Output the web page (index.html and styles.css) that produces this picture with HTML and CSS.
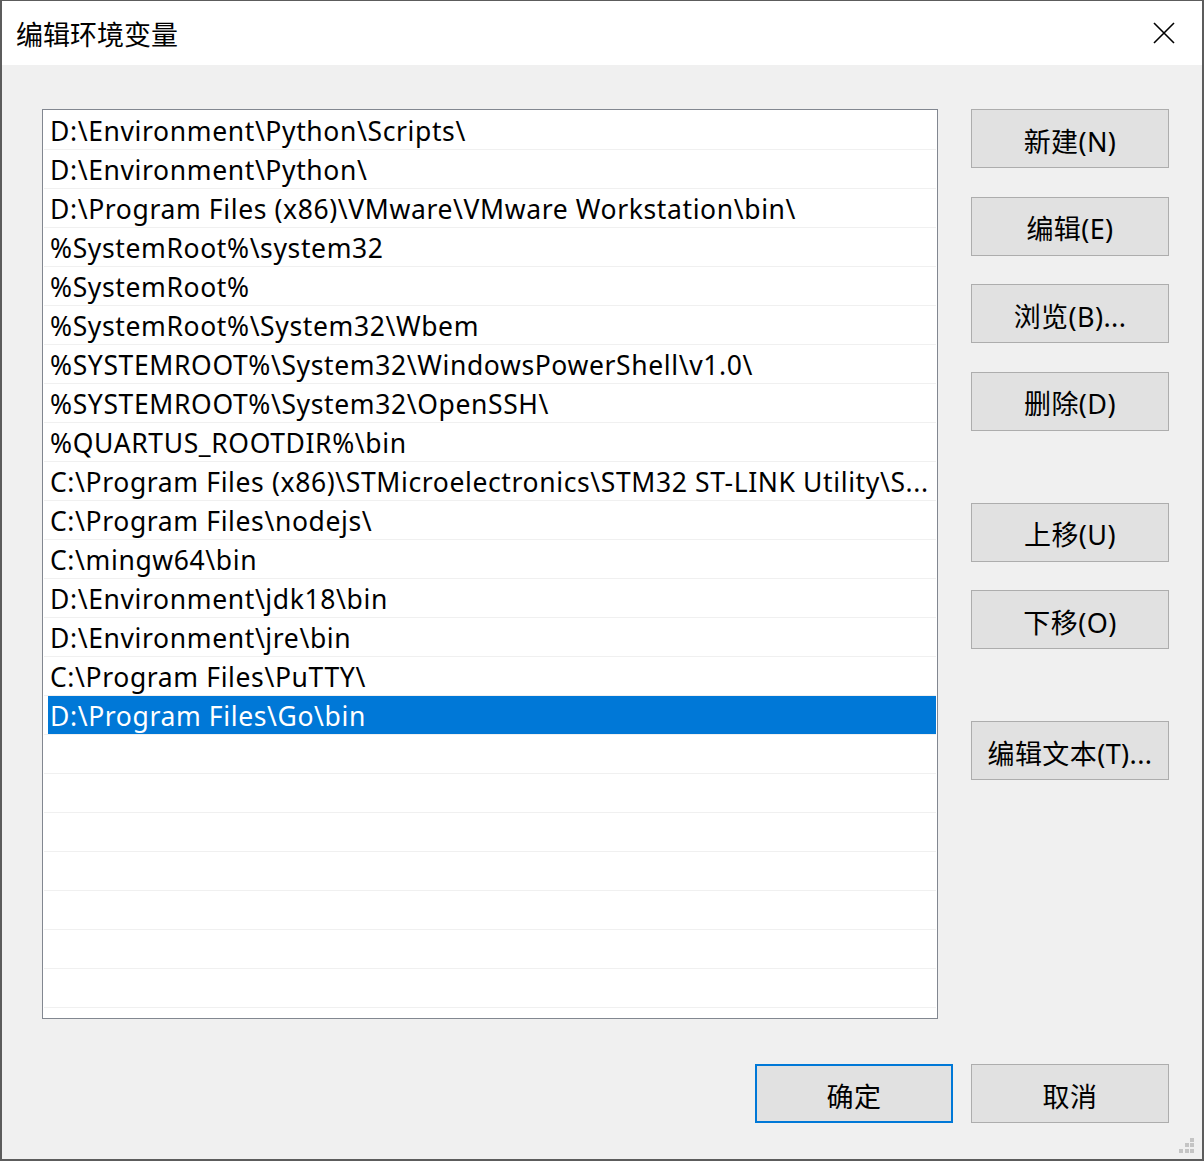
FILE: index.html
```html
<!DOCTYPE html>
<html lang="zh-CN">

<head>
  <meta charset="UTF-8">
  <meta name="viewport" content="width=device-width, initial-scale=1.0">
  <title>编辑环境变量</title>
  <link rel="stylesheet" href="styles.css">
</head>

<body>
  <div class="window">
    <div class="titlebar">
      <div class="title">编辑环境变量</div>
      <svg class="close" width="22" height="22" viewBox="0 0 22 22">
        <path d="M1 1 L21 21 M21 1 L1 21" stroke="#000" stroke-width="1.6" fill="none" />
      </svg>
    </div>

    <div class="content">
      <div class="list">
        <div class="row"><div class="row-text">D:\Environment\Python\Scripts\</div></div>
        <div class="row"><div class="row-text">D:\Environment\Python\</div></div>
        <div class="row"><div class="row-text">D:\Program Files (x86)\VMware\VMware Workstation\bin\</div></div>
        <div class="row"><div class="row-text">%SystemRoot%\system32</div></div>
        <div class="row"><div class="row-text">%SystemRoot%</div></div>
        <div class="row"><div class="row-text">%SystemRoot%\System32\Wbem</div></div>
        <div class="row"><div class="row-text">%SYSTEMROOT%\System32\WindowsPowerShell\v1.0\</div></div>
        <div class="row"><div class="row-text">%SYSTEMROOT%\System32\OpenSSH\</div></div>
        <div class="row"><div class="row-text">%QUARTUS_ROOTDIR%\bin</div></div>
        <div class="row"><div class="row-text">C:\Program Files (x86)\STMicroelectronics\STM32 ST-LINK Utility\S...</div></div>
        <div class="row"><div class="row-text">C:\Program Files\nodejs\</div></div>
        <div class="row"><div class="row-text">C:\mingw64\bin</div></div>
        <div class="row"><div class="row-text">D:\Environment\jdk18\bin</div></div>
        <div class="row"><div class="row-text">D:\Environment\jre\bin</div></div>
        <div class="row"><div class="row-text">C:\Program Files\PuTTY\</div></div>
        <div class="row selected"><div class="row-text">D:\Program Files\Go\bin</div></div>
        <div class="row"><div class="row-text"></div></div>
        <div class="row"><div class="row-text"></div></div>
        <div class="row"><div class="row-text"></div></div>
        <div class="row"><div class="row-text"></div></div>
        <div class="row"><div class="row-text"></div></div>
        <div class="row"><div class="row-text"></div></div>
        <div class="row"><div class="row-text"></div></div>
        <div class="row"><div class="row-text"></div></div>
      </div>

      <div class="side">
        <button class="btn">新建(N)</button>
        <button class="btn">编辑(E)</button>
        <button class="btn">浏览(B)...</button>
        <button class="btn">删除(D)</button>
        <button class="btn group">上移(U)</button>
        <button class="btn">下移(O)</button>
        <button class="btn group">编辑文本(T)...</button>
      </div>
    </div>

    <div class="footer">
      <button class="btn default">确定</button>
      <button class="btn">取消</button>
    </div>

    <svg class="grip" width="16" height="16" viewBox="0 0 16 16">
      <rect x="11" y="0" width="4" height="4" fill="#c4c4c4" />
      <rect x="6" y="5" width="4" height="4" fill="#c4c4c4" />
      <rect x="11" y="5" width="4" height="4" fill="#c4c4c4" />
      <rect x="0" y="11" width="4" height="4" fill="#c4c4c4" />
      <rect x="6" y="11" width="4" height="4" fill="#c4c4c4" />
      <rect x="11" y="11" width="4" height="4" fill="#c4c4c4" />
    </svg>
  </div>
</body>

</html>
```

FILE: styles.css
```css
body {
  margin: 0;
  background-color: #5c5c5c;
  font-family: "Noto Sans", "Noto Sans CJK SC", sans-serif;
}

.window {
  position: relative;
  margin: 1px 2px 0 2px;
  height: 1158px;
  background-color: #f0f0f0;
  display: flex;
  flex-direction: column;
}

.titlebar {
  height: 64px;
  background-color: #fff;
  display: flex;
  align-items: center;
  padding-left: 14px;
}

.title {
  font-family: "Noto Sans CJK SC", sans-serif;
  font-size: 27px;
  color: #000;
  margin-top: 1px;
}

.close {
  margin-left: auto;
  margin-right: 27px;
  margin-top: -1px;
}

.content {
  display: grid;
  grid-template-columns: 896px 198px;
  column-gap: 33px;
  padding: 44px 0 0 40px;
}

.list {
  box-sizing: border-box;
  height: 910px;
  border: 1px solid #828790;
  background-color: #fff;
  padding: 1px;
  overflow: hidden;
}

.row {
  padding-left: 4px;
  border-bottom: 1px solid #f0f0f0;
}

.row-text {
  height: 37px;
  line-height: 38px;
  padding: 1px 2px 0 2px;
  font-size: 26.5px;
  letter-spacing: 0.62px;
  color: #000;
  white-space: nowrap;
  overflow: hidden;
}

.row.selected .row-text {
  background-color: #0078d7;
  color: #fff;
}

.side {
  display: flex;
  flex-direction: column;
  gap: 28.5px;
}

.btn {
  box-sizing: border-box;
  width: 198px;
  height: 59px;
  border: 1px solid #adadad;
  background-color: #e1e1e1;
  font-family: "Noto Sans", "Noto Sans CJK SC", sans-serif;
  font-size: 27px;
  letter-spacing: 0.4px;
  color: #000;
  padding: 3px 0 0 0;
}

.side .group {
  margin-top: 43.5px;
}

.footer {
  display: flex;
  justify-content: flex-end;
  gap: 18px;
  margin-top: 45px;
  padding-right: 33px;
}

.btn.default {
  border: 2px solid #0078d7;
}

.grip {
  position: absolute;
  right: 7px;
  bottom: 5px;
}
```
